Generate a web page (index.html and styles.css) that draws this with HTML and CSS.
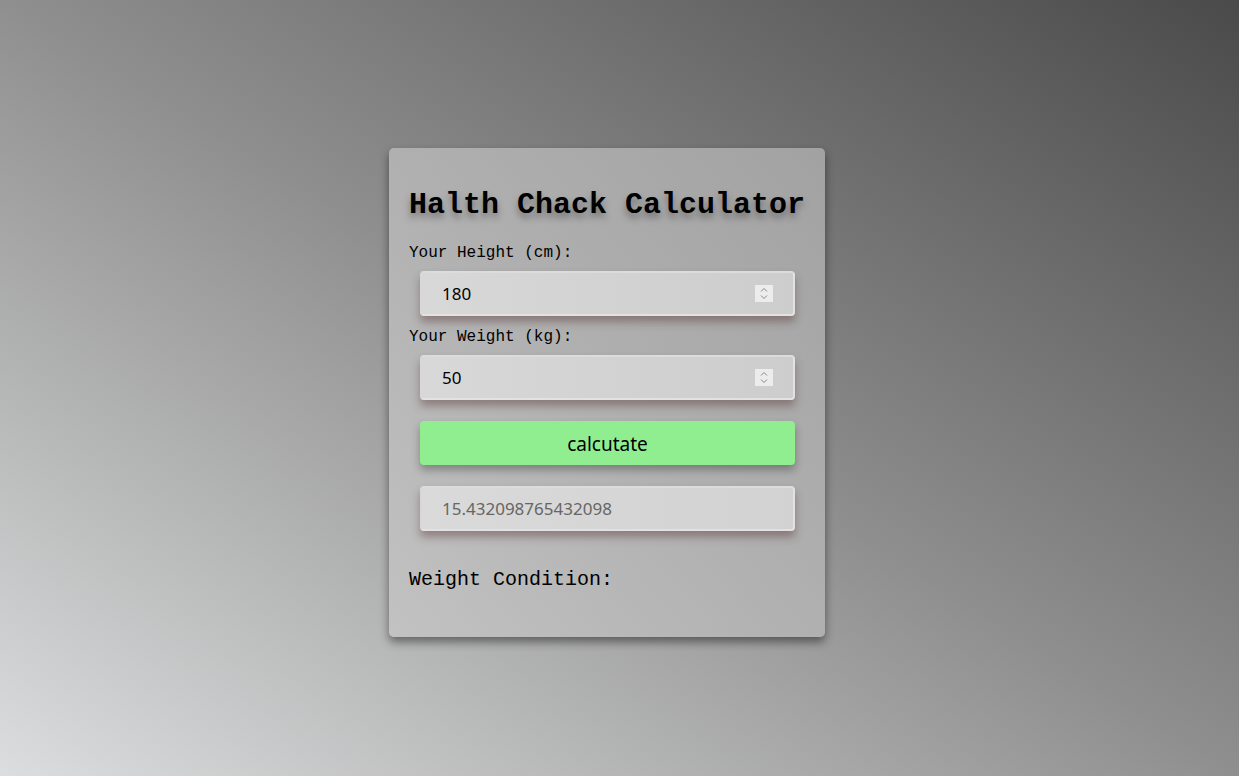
FILE: index.html
```html
<!DOCTYPE html>
<html>
<head>
<meta charset="utf-8">
<link rel="stylesheet" href="styles.css">
</head>
<body>
<div class="card">
  <h1 class="title">Halth Chack Calculator</h1>
  <div class="label">Your Height (cm):</div>
  <div class="field">
    <span>180</span>
    <span class="spin"><svg width="18" height="17" viewBox="0 0 18 17"><path d="M6 6.5 L9 3.5 L12 6.5" fill="none" stroke="#888" stroke-width="1"/><path d="M6 10.5 L9 13.5 L12 10.5" fill="none" stroke="#888" stroke-width="1"/></svg></span>
  </div>
  <div class="label second">Your Weight (kg):</div>
  <div class="field">
    <span>50</span>
    <span class="spin"><svg width="18" height="17" viewBox="0 0 18 17"><path d="M6 6.5 L9 3.5 L12 6.5" fill="none" stroke="#888" stroke-width="1"/><path d="M6 10.5 L9 13.5 L12 10.5" fill="none" stroke="#888" stroke-width="1"/></svg></span>
  </div>
  <div class="button">calcutate</div>
  <div class="field result"><span>15.432098765432098</span></div>
  <div class="condition">Weight Condition:</div>
</div>
</body>
</html>
```
FILE: styles.css
```css
html, body {
  margin: 0;
  height: 100%;
}
body {
  width: 1239px;
  height: 776px;
  overflow: hidden;
  background: linear-gradient(to top right, #dcddde 0%, #8f8f8f 50%, #4a4a4a 100%);
  display: flex;
  justify-content: flex-start;
  align-items: flex-start;
  padding-left: 389px;
  box-sizing: border-box;
}
.card {
  margin-top: 148px;
  width: 436px;
  box-sizing: border-box;
  height: 489px;
  padding: 39px 20px 20px 20px;
  border-radius: 5px;
  background: linear-gradient(to top right, #c2c2c2 0%, #b0b0b0 50%, #a2a2a2 100%);
  box-shadow: 0 5px 10px rgba(0, 0, 0, 0.45);
  display: flex;
  flex-direction: column;
}
.title {
  margin: 0;
  font-family: "Liberation Mono", "Courier New", monospace;
  font-weight: bold;
  font-size: 30px;
  line-height: 36px;
  color: #000;
  white-space: nowrap;
  text-shadow: 0 5px 7px rgba(0, 0, 0, 0.35);
}
.label {
  margin-top: 21px;
  font-family: "Liberation Mono", "Courier New", monospace;
  font-size: 16px;
  line-height: 18px;
  color: #000;
}
.label.second {
  margin-top: 12px;
}
.field {
  margin: 9px 10px 0 11px;
  height: 45px;
  box-sizing: border-box;
  border: 2px solid #e2e2e2;
  border-top-color: #dcdcdc;
  border-left-color: #d8d8d8;
  border-radius: 4px;
  background: linear-gradient(to right, #d8d8d8, #cdcdcd);
  box-shadow: 0 6px 8px rgba(90, 55, 55, 0.45);
  display: flex;
  align-items: center;
  justify-content: space-between;
  padding: 0 20px 0 20px;
  font-family: "Noto Sans", "DejaVu Sans", sans-serif;
  font-size: 17px;
  color: #000;
}
.spin {
  width: 18px;
  height: 17px;
  background: #ececec;
  display: flex;
}
.button {
  margin: 21px 10px 0 11px;
  height: 44px;
  border-radius: 4px;
  background: #90ee90;
  box-shadow: 0 5px 8px rgba(0, 0, 0, 0.3);
  display: flex;
  align-items: center;
  justify-content: center;
  padding-top: 2px;
  box-sizing: border-box;
  font-family: "Noto Sans", "DejaVu Sans", sans-serif;
  font-size: 19px;
  color: #000;
}
.field.result {
  margin-top: 21px;
  color: #666;
  background: linear-gradient(to right, #dadada, #d2d2d2);
}
.condition {
  margin-top: 37px;
  font-family: "Liberation Mono", "Courier New", monospace;
  font-size: 20px;
  line-height: 24px;
  color: #000;
}
```
